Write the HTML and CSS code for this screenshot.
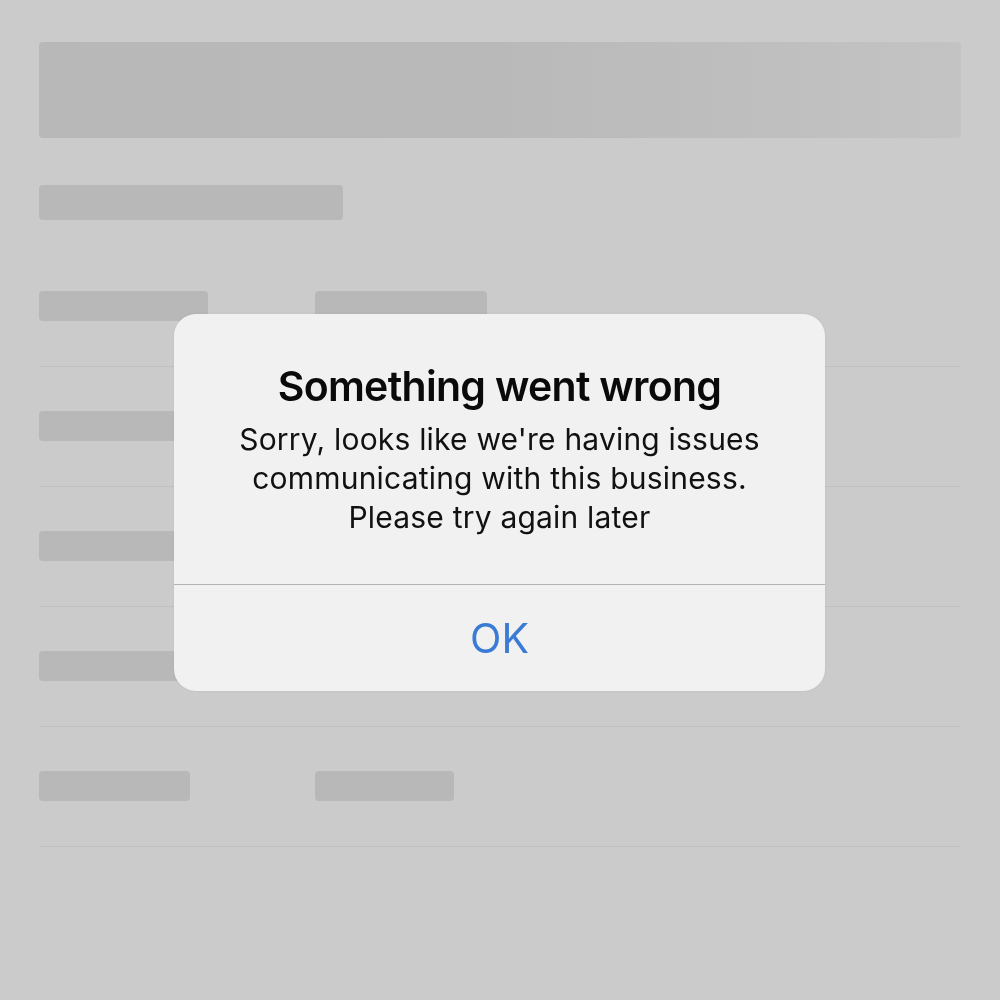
FILE: index.html
```html
<!DOCTYPE html>
<html lang="en">
<head>
<meta charset="utf-8">
<title>Something went wrong</title>
<link rel="stylesheet" href="styles.css">
</head>
<body>
<div class="page">
  <div class="banner"></div>
  <div class="subtitle"></div>
  <div class="list">
    <div class="row"><div class="bar" style="width:169px"></div><div class="bar" style="width:172px"></div></div>
    <div class="row"><div class="bar" style="width:169px"></div><div class="bar" style="width:172px"></div></div>
    <div class="row"><div class="bar" style="width:169px"></div><div class="bar" style="width:172px"></div></div>
    <div class="row"><div class="bar" style="width:169px"></div><div class="bar" style="width:172px"></div></div>
    <div class="row"><div class="bar" style="width:151px"></div><div class="bar" style="width:139px"></div></div>
  </div>
</div>
<div class="overlay">
  <div class="alert" role="alertdialog">
    <div class="alert-body">
      <h1 class="alert-title">Something went wrong</h1>
      <p class="alert-msg">Sorry, looks like we're having issues<br>communicating with this business.<br>Please try again later</p>
    </div>
    <button class="alert-btn" type="button">OK</button>
  </div>
</div>
</body>
</html>
```

FILE: styles.css
```css
html, body {
  margin: 0;
  padding: 0;
  background: #cbcbcb;
}
body {
  font-family: Inter, "Noto Sans", sans-serif;
  width: 1000px;
  height: 1000px;
  overflow: hidden;
}
.page {
  padding: 42px 39px 0 39px;
}
.banner {
  height: 96px;
  border-radius: 4px;
  background: linear-gradient(90deg, #b8b8b8 0%, #b9b9b9 50%, #c3c3c3 100%);
}
.subtitle {
  margin-top: 47px;
  width: 304px;
  height: 35px;
  border-radius: 4px;
  background: #b8b8b8;
}
.list {
  margin-top: 71px;
}
.row {
  display: grid;
  grid-template-columns: 276px auto;
  justify-content: start;
  padding-bottom: 45px;
  border-bottom: 1px solid #c0c0c0;
  margin-bottom: 44px;
  margin-left: 1px;
}
.bar {
  height: 30px;
  border-radius: 4px;
  background: #b8b8b8;
}
.row .bar:first-child {
  margin-left: -1px;
}
.row .bar:last-child {
  margin-left: -1px;
}
.overlay {
  position: fixed;
  inset: 0;
  display: flex;
  align-items: center;
  justify-content: center;
  padding-top: 5px;
  padding-right: 1px;
  box-sizing: border-box;
}
.alert {
  width: 651px;
  background: #f1f1f1;
  border-radius: 22px;
  overflow: hidden;
  display: flex;
  flex-direction: column;
  box-shadow: 0 0 3px rgba(0,0,0,0.06);
}
.alert-body {
  padding: 47px 10px 47px;
  text-align: center;
  border-bottom: 1px solid #b3b3b3;
}
.alert-title {
  margin: 0;
  font-size: 41px;
  line-height: 50px;
  font-weight: 600;
  color: #0a0a0a;
  letter-spacing: -0.7px;
}
.alert-msg {
  margin: 9px 0 0;
  font-size: 30px;
  line-height: 39px;
  font-weight: 400;
  color: #111;
  letter-spacing: 0.2px;
}
.alert-btn {
  height: 106px;
  border: 0;
  background: transparent;
  font-family: inherit;
  font-size: 41px;
  color: #3a7bd5;
  padding: 0;
  cursor: pointer;
}
```
